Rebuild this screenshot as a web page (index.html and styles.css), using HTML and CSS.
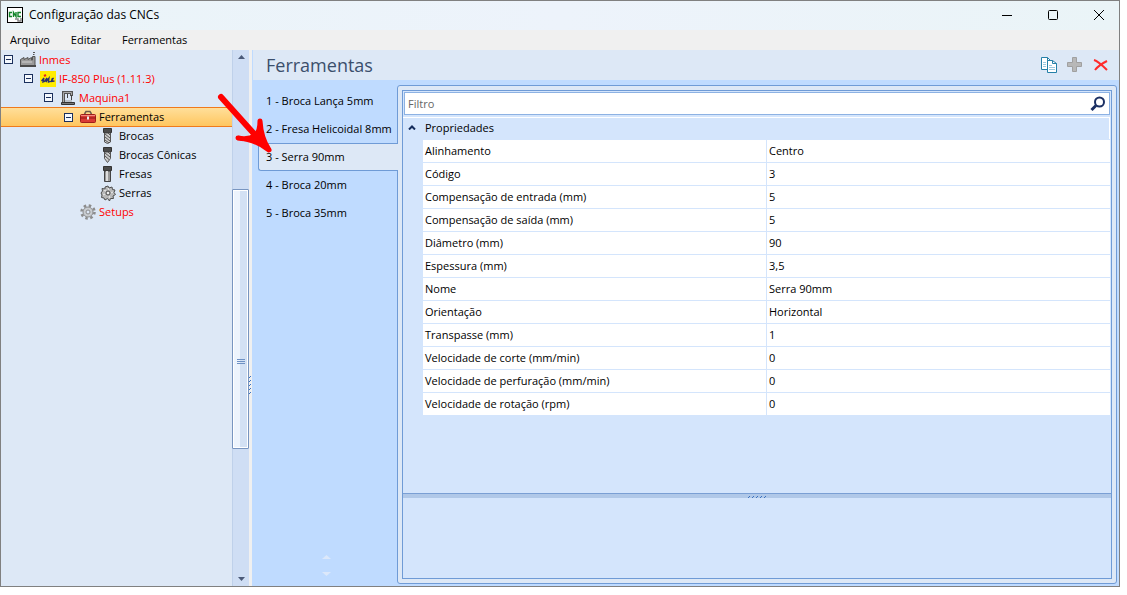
FILE: index.html
```html
<!DOCTYPE html>
<html lang="pt-BR">
<head>
<meta charset="utf-8">
<title>Configuração das CNCs</title>
<link rel="stylesheet" href="styles.css">
</head>
<body>
<svg class="defs" aria-hidden="true">
  <symbol id="minus-box" viewBox="0 0 9 9"><rect x=".5" y=".5" width="8" height="8" fill="#f4f8fd" stroke="#1a2f5c"/><path d="M2 4.5h5" stroke="#1a2f5c"/></symbol>
  <symbol id="factory" viewBox="0 0 16 16"><path d="M.5 14.500V7.500L4 5.500v2l4-2v2l3.500-2V8h1V4.500h2.500v10z" fill="#9a9a9a" stroke="#555"/><path d="M13 .500h2M13 2.500h1.500" stroke="#555"/><path d="M2 10h10" stroke="#d0d0d0"/><path d="M0 14h16" stroke="#4a4a4a" stroke-width="2"/></symbol>
  <symbol id="brand" viewBox="0 0 16 16"><path fill="#ffec00" d="M0 0h16v16H0z"/><path d="M1.500 10L4 7 3 11l1.500-.5L7 7 6 11l3-4-.5 4 3-1 2-3-1.500 1-.5 2.500 3-.5" fill="none" stroke="#29306d" stroke-width="1.300"/><path d="M4 5l2-1" stroke="#e62020" stroke-width="2"/></symbol>
  <symbol id="machine" viewBox="0 0 16 16"><path d="M3.500 12V2.500h8V6" fill="none" stroke="#555" stroke-width="3"/><path d="M3.500 12V2.500h8V6" fill="none" stroke="#aaa"/><path d="M7.500 4v4M11.500 5v5" stroke="#444"/><path d="M1.500 12.500h13v2h-13z" fill="#777" stroke="#333"/><path d="M5 11h7" stroke="#999"/></symbol>
  <symbol id="toolbox" viewBox="0 0 16 16"><path d="M4.500 5L6 2.500h4L11.500 5" fill="none" stroke="#6b5a4a" stroke-width="1.500"/><rect x=".5" y="5.500" width="15" height="8" rx="1" fill="#d93a34" stroke="#a01d1a"/><path d="M1 6.500h14" stroke="#f18b80"/><path d="M0 9h16" stroke="#8f1715"/><path d="M7 7.500h2v3H7z" fill="#eee"/></symbol>
  <symbol id="drill" viewBox="0 0 16 16"><path d="M3.500.500h8v4h-8z" fill="#4b4b4b" stroke="#333"/><path d="M4.500 5v9l3 1.500 3-1.500V5z" fill="#ccc" stroke="#555"/><path d="M5 6l5 4M5 9l5 4M5 12l4 3M8 5l2 2" stroke="#555"/></symbol>
  <symbol id="cone-drill" viewBox="0 0 16 16"><path d="M3.500.500h8v4h-8z" fill="#4b4b4b" stroke="#333"/><path d="M4.500 5v6.500l3 4 3-4V5z" fill="#ccc" stroke="#555"/><path d="M5 6l5 4M5 9l4 3.500M8 5l2 2" stroke="#555"/></symbol>
  <symbol id="mill" viewBox="0 0 16 16"><path d="M3.500.500h8v4h-8z" fill="#4b4b4b" stroke="#333"/><path d="M4.500 5v10.500h6V5z" fill="#999" stroke="#444"/><path d="M7 5v10" stroke="#ddd" stroke-width="2"/></symbol>
  <symbol id="saw" viewBox="0 0 16 16"><path d="M5 2l3-1 1 2 3-1 .5 2.500 2.500.5-1 2.500 1.500 2-2.500 1.500.5 2.500-3 0-1 2.500L7.500 13.500 5 15 4 13l-2.500-.5.5-2.500L1 8l1.500-2L2 3.500l3 .5z" fill="#b8b8b8" stroke="#505050"/><path d="M8 3l1 2M13 7l-2 1M10 13l-1-2M3 10l2-1M4 5l2 1" stroke="#eee"/><circle cx="8" cy="8" r="2" fill="#eee" stroke="#444"/></symbol>
  <symbol id="gear" viewBox="0 0 16 16"><circle cx="8" cy="8" r="6.500" fill="none" stroke="#8c8c8c" stroke-width="2.500" stroke-dasharray="2.500 2.600"/><circle cx="8" cy="8" r="5" fill="#c8ccd0" stroke="#8c8c8c"/><circle cx="8" cy="8" r="2" fill="#dde8f6" stroke="#8c8c8c"/></symbol>
</svg>
<main class="window">
  <header class="titlebar">
    <svg class="app-icon" viewBox="0 0 16 16"><rect x=".5" y=".5" width="15" height="15" fill="#fff" stroke="#000"/><path d="M5 5.500H2.500v4H5M6.500 10V5.500l2.500 4V5M14 5.500h-3v4h3" fill="none" stroke="#14842a" stroke-width="1.400"/><path d="M8 12h3v2h3v-3" fill="none" stroke="#888" stroke-width="1.500"/></svg>
    <h1 class="title">Configuração das CNCs</h1>
    <div class="captions">
      <button class="caption" aria-label="Minimizar"><svg viewBox="0 0 12 12"><path d="M1 6.500h10" stroke="#000"/></svg></button>
      <button class="caption" aria-label="Maximizar"><svg viewBox="0 0 12 12"><rect x="1.500" y="1.500" width="9" height="9" rx="1" fill="none" stroke="#000"/></svg></button>
      <button class="caption" aria-label="Fechar"><svg viewBox="0 0 12 12"><path d="M1 1l10 10M11 1L1 11" stroke="#000"/></svg></button>
    </div>
  </header>
  <nav class="menubar"><button>Arquivo</button><button>Editar</button><button>Ferramentas</button></nav>
  <div class="workspace">
    <aside class="sidebar">
      <ul class="tree">
        <li class="node level-0 alert"><svg class="toggle"><use href="#minus-box"/></svg><svg class="icon"><use href="#factory"/></svg>Inmes</li>
        <li class="node level-1 alert"><svg class="toggle"><use href="#minus-box"/></svg><svg class="icon"><use href="#brand"/></svg>IF-850 Plus (1.11.3)</li>
        <li class="node level-2 alert"><svg class="toggle"><use href="#minus-box"/></svg><svg class="icon"><use href="#machine"/></svg>Maquina1</li>
        <li class="node level-3 selected"><svg class="toggle"><use href="#minus-box"/></svg><svg class="icon"><use href="#toolbox"/></svg>Ferramentas</li>
        <li class="node level-4"><span class="toggle"></span><svg class="icon"><use href="#drill"/></svg>Brocas</li>
        <li class="node level-4"><span class="toggle"></span><svg class="icon"><use href="#cone-drill"/></svg>Brocas Cônicas</li>
        <li class="node level-4"><span class="toggle"></span><svg class="icon"><use href="#mill"/></svg>Fresas</li>
        <li class="node level-4"><span class="toggle"></span><svg class="icon"><use href="#saw"/></svg>Serras</li>
        <li class="node level-3 alert"><span class="toggle"></span><svg class="icon"><use href="#gear"/></svg>Setups</li>
      </ul>
      <div class="scrollbar">
        <button class="scroll-button" aria-label="Rolar para cima"><svg viewBox="0 0 7 4"><path d="M0 4l3.500-4L7 4z" fill="#4b5a78"/></svg></button>
        <div class="scroll-track"><div class="scroll-before"></div><div class="scroll-thumb"><span class="thumb-grip"></span></div><div class="scroll-after"></div></div>
        <button class="scroll-button" aria-label="Rolar para baixo"><svg viewBox="0 0 7 4"><path d="M0 0h7L3.500 4z" fill="#4b5a78"/></svg></button>
      </div>
    </aside>
    <div class="splitter"><svg class="split-grip" viewBox="0 0 3 18"><path d="M0 2l2-2M0 6l2-2M0 10l2-2M0 14l2-2M0 18l2-2" stroke="#3d73c0"/></svg></div>
    <section class="content">
      <header class="content-header">
        <h2>Ferramentas</h2>
        <div class="actions">
          <button aria-label="Copiar"><svg viewBox="0 0 16 16"><path d="M.5.500h6l3 3v9h-9z" fill="#fff" stroke="#2580a8"/><path d="M6.500 3.500h5l4 3v9h-9z" fill="#fff" stroke="#2580a8"/><path d="M2 5.500h3M2 7.500h3M2 9.500h3M8 8.500h3M8 10.500h6M8 12.500h6" stroke="#9ac9e0"/><path d="M6.500.500v3h3M11.500 3.500v3h4" fill="none" stroke="#2580a8"/></svg></button>
          <button aria-label="Adicionar"><svg viewBox="0 0 16 16"><path d="M5.500.500h4v5h5v4h-5v5h-4v-5h-5v-4h5z" fill="#b8b8b8" stroke="#a0a0a0"/></svg></button>
          <button aria-label="Excluir"><svg viewBox="0 0 16 16"><path d="M1 3C5 4 9 8 14 13M14 4C10 6 5 9 2 13" fill="none" stroke="#ff2b2b" stroke-width="2"/></svg></button>
        </div>
      </header>
      <div class="content-body">
        <div class="tabs">
          <div class="tab-list" role="tablist">
            <button class="tab" role="tab">1 - Broca Lança 5mm</button>
            <button class="tab" role="tab">2 - Fresa Helicoidal 8mm</button>
            <button class="tab active" role="tab" aria-selected="true">3 - Serra 90mm</button>
            <button class="tab" role="tab">4 - Broca 20mm</button>
            <button class="tab" role="tab">5 - Broca 35mm</button>
          </div>
          <div class="tab-scroll"><svg viewBox="0 0 9 22"><path d="M0 4l4.500-4L9 4zM0 17h9l-4.500 4z" fill="#dce8fa"/></svg></div>
        </div>
        <div class="panel">
          <div class="inspector">
            <label class="filter"><input type="text" placeholder="Filtro" aria-label="Filtro"><svg viewBox="0 0 16 16"><circle cx="9.500" cy="6" r="4.500" fill="none" stroke="#1b2f63" stroke-width="2"/><path d="M6 9.500L1.500 14" stroke="#1b2f63" stroke-width="3"/></svg></label>
            <div class="group"><svg viewBox="0 0 8 5"><path d="M1 4.500l3-3 3 3" fill="none" stroke="#152c5c" stroke-width="2"/></svg>Propriedades</div>
            <table class="properties">
              <tr><th scope="row">Alinhamento</th><td>Centro</td></tr>
              <tr><th scope="row">Código</th><td>3</td></tr>
              <tr><th scope="row">Compensação de entrada (mm)</th><td>5</td></tr>
              <tr><th scope="row">Compensação de saída (mm)</th><td>5</td></tr>
              <tr><th scope="row">Diâmetro (mm)</th><td>90</td></tr>
              <tr><th scope="row">Espessura (mm)</th><td>3,5</td></tr>
              <tr><th scope="row">Nome</th><td>Serra 90mm</td></tr>
              <tr><th scope="row">Orientação</th><td>Horizontal</td></tr>
              <tr><th scope="row">Transpasse (mm)</th><td>1</td></tr>
              <tr><th scope="row">Velocidade de corte (mm/min)</th><td>0</td></tr>
              <tr><th scope="row">Velocidade de perfuração (mm/min)</th><td>0</td></tr>
              <tr><th scope="row">Velocidade de rotação (rpm)</th><td>0</td></tr>
            </table>
            <div class="filler"></div>
            <div class="divider"><svg viewBox="0 0 19 3"><path d="M0 3l2-2M4 3l2-2M8 3l2-2M12 3l2-2M16 3l2-2" stroke="#3d73c0"/></svg></div>
            <div class="description"></div>
          </div>
        </div>
      </div>
    </section>
  </div>
  <svg class="arrow" viewBox="0 0 62 70" aria-hidden="true"><path d="M7 8L42 47" stroke="#f00" stroke-width="6" stroke-linecap="round"/><path d="M46 32q1 17 9 29Q41 50 24 49Q34 51 41 47Q46 43 46 32z" fill="#f00" stroke="#f00" stroke-width="5" stroke-linecap="round" stroke-linejoin="round"/></svg>
</main>
</body>
</html>
```
FILE: styles.css
```css
* { box-sizing: border-box; }
body { margin: 0; background: #fff; color: #000; font: 11px/16px "Open Sans", "Noto Sans", sans-serif; }
button { border: 0; padding: 0; background: none; color: inherit; font: inherit; }
svg { display: block; flex: none; }
h1, h2, ul { margin: 0; padding: 0; font-weight: 400; list-style: none; }
.defs { display: none; }
.window { position: relative; display: flex; flex-direction: column; height: calc(100vh - 8px); min-height: 540px; margin-right: 7px; border: 1px solid #808080; }
.titlebar { display: flex; align-items: center; height: 29px; padding: 0 6px 2px; background: linear-gradient(90deg, #eaf4f8, #edf3fb 50%, #eaf4f7); }
.app-icon { width: 16px; height: 16px; }
.title { margin-left: 6px; font-size: 12px; line-height: 18px; }
.captions { display: flex; margin-left: auto; margin-right: -9px; }
.caption { display: flex; align-items: center; justify-content: center; width: 46px; height: 27px; }
.caption svg { width: 12px; height: 12px; }
.menubar { display: flex; align-items: center; gap: 21px; height: 20px; padding-left: 9px; background: #f0f0f0; }
.workspace { display: flex; flex: 1; min-height: 0; }
.sidebar { display: flex; width: 248px; background: #dde8f6; }
.tree { flex: 1; }
.node { display: flex; align-items: center; height: 19px; }
.toggle { width: 9px; height: 9px; margin-right: 7px; }
.icon { width: 16px; height: 16px; margin-right: 3px; }
.alert { color: #f00; }
.level-0 { padding-left: 3px; }
.level-1 { padding-left: 23px; }
.level-2 { padding-left: 43px; }
.level-3 { padding-left: 63px; }
.level-4 { padding-left: 83px; }
.selected { height: 20px; margin-bottom: -1px; border: solid #f07a1c; border-width: 1px 0; background: linear-gradient(#ffdf9a, #ffc65f); }
.scrollbar { display: flex; flex-direction: column; width: 17px; border-left: 1px solid #bfd1ea; background: #cfdef4; }
.scroll-button { display: flex; align-items: center; justify-content: center; height: 14px; }
.scroll-button svg { width: 7px; height: 4px; }
.scroll-track { display: flex; flex: 1; flex-direction: column; }
.scroll-before { flex: 125; }
.scroll-thumb { display: flex; flex: 260; flex-direction: column; align-items: center; margin-left: -1px; border: 1px solid #7895c0; border-radius: 1px; background: linear-gradient(90deg, #edf4fd 45%, #d3e1f4 45%); box-shadow: inset 0 0 0 1px #fff; }
.scroll-thumb::before { flex: 2; content: ""; }
.scroll-thumb::after { flex: 1; content: ""; }
.scroll-after { flex: 123; }
.thumb-grip { width: 8px; height: 5px; border: solid #6e91c4; border-width: 1px 0; background: linear-gradient(#0000 1px, #6e91c4 1px 2px, #0000 2px); }
.splitter { display: flex; align-items: center; justify-content: flex-end; width: 3px; padding-top: 134px; background: #f0f0f0; }
.split-grip { width: 3px; height: 18px; }
.content { display: flex; flex: 1; flex-direction: column; min-width: 0; background: #bfdbff; }
.content-header { display: flex; align-items: center; justify-content: space-between; height: 30px; margin-left: 1px; padding: 0 10px 0 13px; background: #dde8f6; color: #3b4f6c; }
.content-header h2 { font-size: 18px; line-height: 24px; }
.actions { display: flex; gap: 10px; }
.actions svg { width: 16px; height: 16px; }
.content-body { display: flex; flex: 1; min-height: 0; padding: 5px 2px 2px 6px; }
.tabs { display: flex; flex-direction: column; width: 140px; }
.tab-list { display: flex; flex-direction: column; padding-top: 2px; }
.tab { position: relative; height: 28px; padding-left: 8px; text-align: left; white-space: nowrap; }
.active { z-index: 1; border: 1px solid #6f9bd6; border-right: 0; border-radius: 3px 0 0 3px; background: #dde8f6; padding-left: 7px; }
.tab-scroll { display: flex; flex: 1; align-items: flex-end; justify-content: center; padding: 0 3px 7px 0; }
.tab-scroll svg { width: 9px; height: 22px; }
.panel { display: flex; flex: 1; min-width: 0; margin-left: -1px; padding: 4px; border: 1px solid #6f9bd6; border-radius: 3px; background: #dde8f6; }
.inspector { display: flex; flex: 1; flex-direction: column; min-width: 0; border: 1px solid #6f9bd6; background: #d4e5fc; }
.filter { display: flex; align-items: center; height: 23px; margin: 1px 1px 2px; padding-right: 3px; border: 1px solid #8db2e3; background: #fff; }
.filter input { flex: 1; height: 20px; padding: 0 3px; border: 0; outline: 0; background: none; color: #444; font: inherit; }
.filter input::placeholder { color: #666; opacity: 1; }
.filter svg { width: 16px; height: 16px; }
.group { display: flex; align-items: center; gap: 9px; height: 22px; margin-right: 1px; padding: 0 0 2px 5px; border: solid #fff; border-width: 1px 1px 0 0; }
.group svg { width: 8px; height: 5px; }
.properties { width: calc(100% - 19px); margin-left: 19px; border-collapse: collapse; table-layout: fixed; background: #fff; }
.properties th, .properties td { height: 23px; padding: 0 2px; border: 1px solid #d4e5fc; font-weight: 400; text-align: left; }
.filler { flex: 1; }
.divider { display: flex; align-items: center; justify-content: center; height: 5px; border-top: 1px solid #7a9fd4; background: #b0c8e8; }
.divider svg { width: 19px; height: 3px; }
.description { height: 80px; }
.arrow { position: absolute; top: 88px; left: 213px; z-index: 3; width: 62px; height: 70px; pointer-events: none; }
```
